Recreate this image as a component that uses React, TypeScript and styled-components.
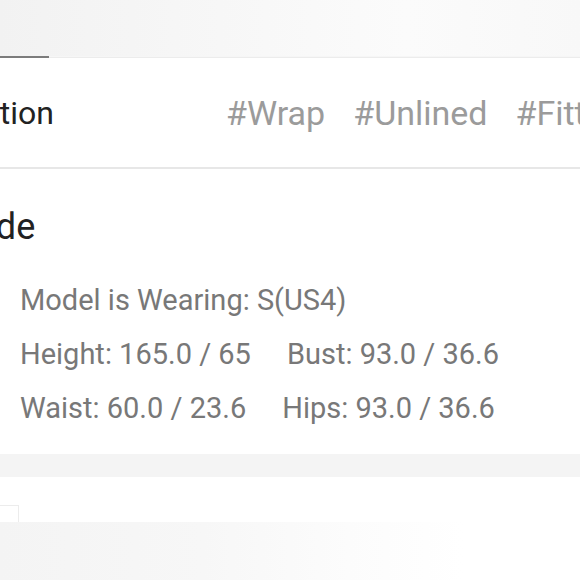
import styled, { createGlobalStyle } from 'styled-components';

const Global = createGlobalStyle`
	html, body {
		margin: 0;
		padding: 0;
		background: #ffffff;
		overflow: hidden;
	}
	body {
		font-family: Roboto, 'Noto Sans', 'Liberation Sans', sans-serif;
	}
`;

const tags = ['#Wrap', '#Unlined', '#Fitted'];

const measurements = [
	[
		{ label: 'Height', value: '165.0 / 65' },
		{ label: 'Bust', value: '93.0 / 36.6' },
	],
	[
		{ label: 'Waist', value: '60.0 / 23.6' },
		{ label: 'Hips', value: '93.0 / 36.6' },
	],
];

const Styled = {
	Page: styled.div`
		width: 580px;
		height: 580px;
		overflow: hidden;
		display: flex;
		flex-direction: column;
		background: #ffffff;
	`,
	TopBar: styled.div`
		flex: none;
		height: 56px;
		background: linear-gradient(90deg, #f2f2f2 0%, #f6f6f6 30%, #fbfbfb 70%, #f8f8f8 100%);
	`,
	TabRule: styled.div`
		flex: none;
		display: flex;
		height: 2px;
		background: linear-gradient(180deg, #f6f6f6 0 1px, #ececec 1px 2px);
	`,
	TabIndicator: styled.span`
		width: 49px;
		height: 2px;
		background: #7c7c7c;
	`,
	DescriptionRow: styled.div`
		flex: none;
		height: 109px;
		display: flex;
		align-items: center;
		border-bottom: 2px solid #e7e7e7;
		white-space: nowrap;
	`,
	Heading: styled.h2<{ $lead: number; $size: number }>`
		margin: 0 0 0 ${({ $lead }) => -$lead}px;
		font-size: ${({ $size }) => $size}px;
		line-height: 40px;
		font-weight: 400;
		color: #222222;
		flex: none;
	`,
	Tags: styled.div`
		display: flex;
		margin-left: 172px;
		gap: 28px;
		flex: none;
	`,
	Tag: styled.span`
		font-size: 34px;
		line-height: 40px;
		color: #9b9b9b;
	`,
	SizeSection: styled.section`
		flex: none;
		display: flex;
		flex-direction: column;
		padding: 38px 0 19px;
	`,
	Details: styled.div`
		display: flex;
		flex-direction: column;
		padding: 26px 0 0 20px;
	`,
	Line: styled.div`
		font-size: 29px;
		line-height: 54px;
		color: #787878;
		white-space: nowrap;
	`,
	Measure: styled.span`
		margin-right: 36px;
	`,
	Band: styled.div`
		flex: none;
		height: 23px;
		background: #f4f4f4;
	`,
	NextSection: styled.div`
		flex: none;
		height: 45px;
		display: flex;
		align-items: flex-end;
	`,
	Thumb: styled.div`
		width: 18px;
		height: 16px;
		border-top: 1px solid #ececec;
		border-right: 1px solid #ececec;
		background: #ffffff;
	`,
	Gallery: styled.div`
		flex: 1;
		background: linear-gradient(90deg, #f4f4f4 0%, #f7f7f7 35%, #fcfcfc 60%, #ffffff 80%);
	`,
};

export default function App() {
	return (
		<>
			<Global />
			<Styled.Page>
				<Styled.TopBar />
				<Styled.TabRule>
					<Styled.TabIndicator />
				</Styled.TabRule>
				<Styled.DescriptionRow>
					<Styled.Heading $lead={108} $size={32}>
						Description
					</Styled.Heading>
					<Styled.Tags>
						{tags.map((tag) => (
							<Styled.Tag key={tag}>{tag}</Styled.Tag>
						))}
					</Styled.Tags>
				</Styled.DescriptionRow>
				<Styled.SizeSection>
					<Styled.Heading $lead={133} $size={36}>
						Size Guide
					</Styled.Heading>
					<Styled.Details>
						<Styled.Line>Model is Wearing: S(US4)</Styled.Line>
						{measurements.map((row) => (
							<Styled.Line key={row[0].label}>
								{row.map((m) => (
									<Styled.Measure key={m.label}>
										{m.label}: {m.value}
									</Styled.Measure>
								))}
							</Styled.Line>
						))}
					</Styled.Details>
				</Styled.SizeSection>
				<Styled.Band />
				<Styled.NextSection>
					<Styled.Thumb />
				</Styled.NextSection>
				<Styled.Gallery />
			</Styled.Page>
		</>
	);
}
